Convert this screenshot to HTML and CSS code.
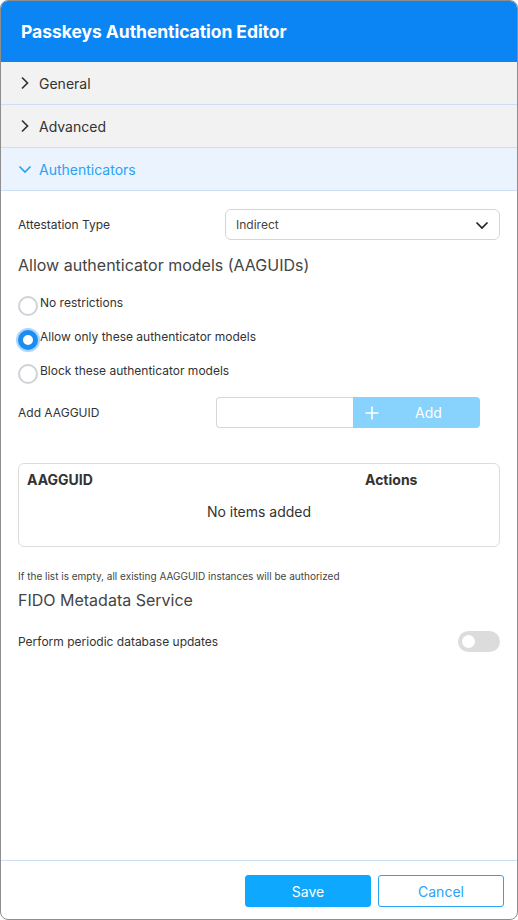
FILE: index.html
```html
<!DOCTYPE html>
<html lang="en">
<head>
<meta charset="utf-8">
<title>Passkeys Authentication Editor</title>
<link rel="stylesheet" href="styles.css">
</head>
<body>
<div class="dialog">
  <div class="header"><h1 class="title">Passkeys Authentication Editor</h1></div>

  <div class="acc-item">
    <svg class="chev" width="14" height="14" viewBox="0 0 14 14"><polyline points="4,1.5 9.5,7 4,12.5" fill="none" stroke="#333" stroke-width="1.7"/></svg>
    <span>General</span>
  </div>
  <div class="acc-item">
    <svg class="chev" width="14" height="14" viewBox="0 0 14 14"><polyline points="4,1.5 9.5,7 4,12.5" fill="none" stroke="#333" stroke-width="1.7"/></svg>
    <span>Advanced</span>
  </div>
  <div class="acc-item active">
    <svg class="chev" width="14" height="14" viewBox="0 0 14 14"><polyline points="1.5,4.5 7,10 12.5,4.5" fill="none" stroke="#2aa2f6" stroke-width="1.7"/></svg>
    <span>Authenticators</span>
  </div>

  <div class="content">
    <div class="field-row">
      <span class="label">Attestation Type</span>
      <div class="select">
        <span>Indirect</span>
        <svg width="14" height="14" viewBox="0 0 14 14"><polyline points="1.5,4.5 7,10 12.5,4.5" fill="none" stroke="#222" stroke-width="1.7"/></svg>
      </div>
    </div>

    <h2 class="section-title first">Allow authenticator models (AAGUIDs)</h2>

    <div class="radios">
      <div class="radio-row"><span class="radio"></span><span class="rlabel">No restrictions</span></div>
      <div class="radio-row"><span class="radio checked"></span><span class="rlabel">Allow only these authenticator models</span></div>
      <div class="radio-row"><span class="radio"></span><span class="rlabel">Block these authenticator models</span></div>
    </div>

    <div class="add-row">
      <span class="label">Add AAGGUID</span>
      <div class="add-group">
        <div class="add-input"></div>
        <div class="add-btn">
          <svg width="14" height="14" viewBox="0 0 14 14"><path d="M7 0.5V13.5M0.5 7H13.5" stroke="#fff" stroke-width="1.6"/></svg>
          <span>Add</span>
        </div>
      </div>
    </div>

    <div class="table">
      <div class="thead">
        <span class="th-guid">AAGGUID</span>
        <span class="th-actions">Actions</span>
      </div>
      <div class="empty">No items added</div>
    </div>

    <p class="note">If the list is empty, all existing AAGGUID instances will be authorized</p>

    <h2 class="section-title">FIDO Metadata Service</h2>

    <div class="toggle-row">
      <span class="label">Perform periodic database updates</span>
      <span class="toggle"><span class="knob"></span></span>
    </div>
  </div>

  <div class="footer">
    <button class="btn save">Save</button>
    <button class="btn cancel">Cancel</button>
  </div>
</div>
</body>
</html>
```

FILE: styles.css
```css
* { box-sizing: border-box; }
html, body { margin: 0; padding: 0; background: #fff; }
body { font-family: Inter, "Noto Sans", "Liberation Sans", sans-serif; color: #333; }

.dialog {
  width: 518px;
  height: 920px;
  border: 1px solid #8e8e8e;
  border-radius: 8px;
  overflow: hidden;
  display: flex;
  flex-direction: column;
}

.header {
  height: 61px;
  background: #0c85f4;
  display: flex;
  align-items: center;
  padding-left: 20px;
  flex-shrink: 0;
}
.title {
  margin: 0;
  color: #fff;
  font-size: 17.5px;
  font-weight: 700;
  letter-spacing: -0.05px;
}

.acc-item {
  height: 43px;
  background: #f2f2f2;
  border-bottom: 1px solid #cddff6;
  display: flex;
  align-items: center;
  padding-left: 17px;
  gap: 7px;
  font-size: 14px;
  color: #333;
  flex-shrink: 0;
}
.acc-item.active {
  background: #ebf3fe;
  color: #2aa2f6;
}
.chev { display: block; }

.content {
  flex: 1;
  padding: 18px 17px 0 17px;
}

.label { font-size: 12px; color: #333; }

.field-row {
  display: flex;
  justify-content: space-between;
  align-items: center;
}
.select {
  width: 275px;
  height: 31px;
  border: 1px solid #d6d6d6;
  border-radius: 6px;
  display: flex;
  align-items: center;
  justify-content: space-between;
  padding: 0 10px 0 10px;
  font-size: 12px;
  color: #444;
}

.section-title {
  margin: 15px 0 0 0;
  font-size: 16px;
  line-height: 20px;
  font-weight: 400;
  color: #444;
}

.radios { margin-top: 11px; }
.radio-row {
  height: 34px;
  display: flex;
  align-items: center;
  gap: 2px;
}
.radio {
  width: 20px;
  height: 20px;
  border-radius: 50%;
  border: 2px solid #cfd3d8;
  background: #fff;
  margin-top: 6px;
  flex-shrink: 0;
}
.radio.checked {
  border: 5px solid #1a8df2;
  box-shadow: 0 0 0 2px #a9d5ff;
  width: 20px;
  height: 20px;
}
.rlabel { font-size: 12px; color: #333; margin-top: -2px; }

.add-row {
  margin-top: 9px;
  display: flex;
  align-items: center;
}
.add-row .label { width: 198px; }
.add-group { display: flex; height: 31px; }
.add-input {
  width: 137px;
  border: 1px solid #d6d6d6;
  border-right: none;
  border-radius: 4px 0 0 4px;
}
.add-btn {
  width: 127px;
  background: #87d3fe;
  border-radius: 0 4px 4px 0;
  display: flex;
  align-items: center;
  padding-left: 12px;
  color: #fff;
  font-size: 14px;
}
.add-btn span { margin-left: 36px; }

.table {
  margin-top: 35px;
  height: 84px;
  border: 1px solid #dcdcdc;
  border-radius: 6px;
  padding: 8px 8px 0 8px;
}
.thead {
  display: flex;
  font-size: 14px;
  font-weight: 700;
  color: #333;
  line-height: 16px;
}
.th-guid { width: 338px; }
.empty {
  margin-top: 16px;
  text-align: center;
  font-size: 14px;
  color: #333;
  line-height: 16px;
}

.note {
  margin: 22px 0 0 0;
  font-size: 10px;
  line-height: 14px;
  color: #444;
}
.note + .section-title { margin-top: 7px; }

.toggle-row {
  margin-top: 21px;
  display: flex;
  justify-content: space-between;
  align-items: center;
  height: 21px;
}
.toggle {
  width: 42px;
  height: 21px;
  border-radius: 11px;
  background: #dcdcdc;
  position: relative;
}
.knob {
  position: absolute;
  left: 4px;
  top: 4px;
  width: 13px;
  height: 13px;
  border-radius: 50%;
  background: #fff;
}

.footer {
  height: 59px;
  border-top: 1px solid #cddff6;
  display: flex;
  justify-content: flex-end;
  align-items: flex-start;
  gap: 7px;
  padding: 14px 13px 0 0;
  flex-shrink: 0;
}
.btn {
  width: 126px;
  height: 32px;
  border-radius: 3px;
  font-family: Inter, "Noto Sans", "Liberation Sans", sans-serif;
  font-size: 14px;
  cursor: pointer;
}
.save {
  background: #0ea8ff;
  border: 1px solid #0ea8ff;
  color: #fff;
}
.cancel {
  background: #fff;
  border: 1px solid #2aa2f6;
  color: #2aa2f6;
}
```
